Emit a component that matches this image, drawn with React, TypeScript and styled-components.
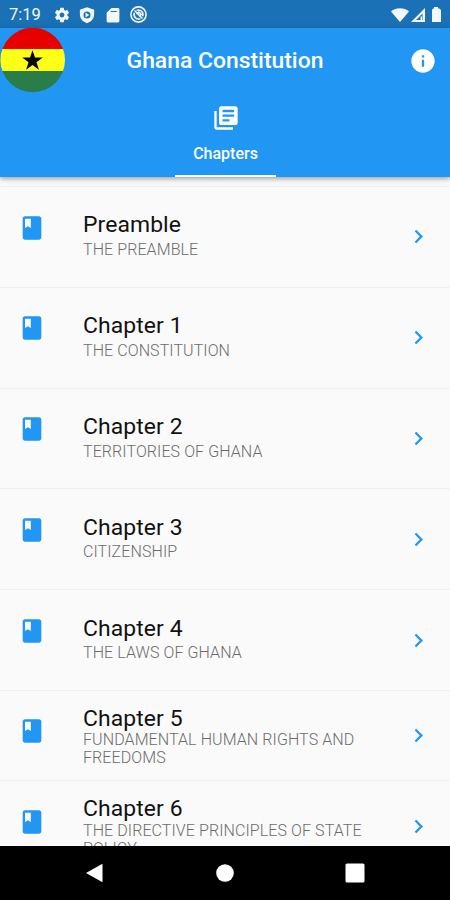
import React from "react";
import styled, { createGlobalStyle } from "styled-components";

const GlobalStyle = createGlobalStyle`
  * { box-sizing: border-box; }
  body { margin: 0; background: #fafafa; font-family: Roboto, sans-serif; }
`;

const Screen = styled.div`
  width: 450px;
  height: 900px;
  display: flex;
  flex-direction: column;
  overflow: hidden;
  background: #fafafa;
`;

const StatusBar = styled.div`
  height: 28px;
  flex: none;
  display: flex;
  align-items: center;
  padding: 1px 6px 0 9px;
  background: #1b71b6;
  color: #f2f8fd;
`;

const Clock = styled.span`
  width: 44px;
  font-size: 16.5px;
  line-height: 20px;
`;

const StatusGroup = styled.div<{ $gap: number; $end?: boolean }>`
  display: flex;
  align-items: center;
  gap: ${(p) => p.$gap}px;
  margin-left: ${(p) => (p.$end ? "auto" : "0")};
`;

const Icon = styled.svg<{ $size: number }>`
  display: block;
  flex: none;
  width: ${(p) => p.$size}px;
  height: ${(p) => p.$size}px;
  fill: currentColor;
`;

const Header = styled.header`
  height: 149px;
  flex: none;
  z-index: 1;
  display: flex;
  flex-direction: column;
  background: #2196f3;
  color: #fff;
  box-shadow: 0 2px 4px rgba(0, 0, 0, 0.28), 0 1px 9px rgba(0, 0, 0, 0.1);
`;

const TitleBar = styled.div`
  height: 65px;
  display: grid;
  grid-template-columns: 66px 1fr 66px;
  align-items: center;
`;

const Title = styled.h1`
  margin: 0;
  text-align: center;
  font-size: 22.9px;
  line-height: 28px;
  font-weight: 500;
`;

const InfoButton = styled.button`
  display: flex;
  justify-content: flex-end;
  padding: 0 13px 1px 0;
  border: 0;
  background: none;
  color: #fff;
`;

const Tabs = styled.nav`
  flex: 1;
  display: flex;
  justify-content: center;
  padding-left: 1px;
`;

const Tab = styled.div`
  width: 101px;
  display: flex;
  flex-direction: column;
  align-items: center;
  padding-top: 11px;
  border-bottom: 2px solid #f2fcff;
`;

const TabLabel = styled.span`
  margin-top: 12px;
  font-size: 16px;
  line-height: 19px;
  font-weight: 500;
`;

const List = styled.main`
  flex: 1;
  min-height: 0;
  overflow: hidden;
  padding-top: 9px;
`;

const Row = styled.div<{ $tall?: boolean }>`
  height: ${(p) => (p.$tall ? 90.5 : 100.8)}px;
  display: grid;
  grid-template-columns: 64.6px 310px 1fr;
  align-items: start;
  padding-left: 18.4px;
  border-top: 1px solid #efefef;
  color: #2196f3;
`;

const BookCell = styled.div`
  padding-top: 26.5px;
`;

const ArrowCell = styled.div`
  align-self: center;
  padding-left: 12px;
`;

const RowText = styled.div<{ $tall?: boolean }>`
  padding-top: ${(p) => (p.$tall ? 13.8 : 24.4)}px;
`;

const RowTitle = styled.div`
  color: #111;
  font-size: 22.9px;
  line-height: 27px;
  letter-spacing: 0.1px;
`;

const RowSubtitle = styled.div<{ $tall?: boolean }>`
  margin-top: ${(p) => (p.$tall ? -0.4 : 2.7)}px;
  color: #6c6c6c;
  font-size: 16px;
  line-height: 18px;
  font-weight: 300;
  letter-spacing: 0.09px;
`;

const NavBar = styled.footer`
  height: 54px;
  flex: none;
  display: flex;
  align-items: center;
  justify-content: space-between;
  padding: 0 85px;
  background: #000;
  color: #fff;
`;

const BOOK =
  "M18 2H6c-1.1 0-2 .9-2 2v16c0 1.1.9 2 2 2h12c1.1 0 2-.9 2-2V4c0-1.1-.9-2-2-2zM6 4h5v8l-2.5-1.5L6 12V4z";
const CHEVRON = "M10 6 8.59 7.41 13.17 12l-4.58 4.59L10 18l6-6z";
const LIBRARY =
  "M4 6H2v14c0 1.1.9 2 2 2h14v-2H4V6zm16-4H8c-1.1 0-2 .9-2 2v12c0 1.1.9 2 2 2h12c1.1 0 2-.9 2-2V4c0-1.1-.9-2-2-2zm-1 9H9V9h10v2zm-4 4H9v-2h6v2zm4-8H9V5h10v2z";
const INFO =
  "M12 2C6.48 2 2 6.48 2 12s4.48 10 10 10 10-4.48 10-10S17.52 2 12 2zm1 15h-2v-6h2v6zm0-8h-2V7h2v2z";
const GEAR =
  "M19.14 12.94c.04-.3.06-.61.06-.94 0-.32-.02-.64-.07-.94l2.03-1.58c.18-.14.23-.41.12-.61l-1.92-3.32c-.12-.22-.37-.29-.59-.22l-2.39.96c-.5-.38-1.03-.7-1.62-.94l-.36-2.54c-.04-.24-.24-.41-.48-.41h-3.84c-.24 0-.43.17-.47.41l-.36 2.54c-.59.24-1.13.57-1.62.94l-2.39-.96c-.22-.08-.47 0-.59.22L2.74 8.87c-.12.21-.08.47.12.61l2.03 1.58c-.05.3-.09.63-.09.94s.02.64.07.94l-2.03 1.58c-.18.14-.23.41-.12.61l1.92 3.32c.12.22.37.29.59.22l2.39-.96c.5.38 1.03.7 1.62.94l.36 2.54c.05.24.24.41.48.41h3.84c.24 0 .44-.17.47-.41l.36-2.54c.59-.24 1.13-.56 1.62-.94l2.39.96c.22.08.47 0 .59-.22l1.92-3.32c.12-.22.07-.47-.12-.61l-2.01-1.58zM12 15.2c-1.770 0-3.200-1.430-3.200-3.200s1.430-3.200 3.200-3.200 3.200 1.430 3.200 3.200-1.430 3.200-3.200 3.200z";

type GlyphProps = { path: string; size: number };
const Glyph = ({ path, size }: GlyphProps) => (
  <Icon $size={size} viewBox="0 0 24 24">
    <path d={path} />
  </Icon>
);

const Flag = () => (
  <Icon $size={66} viewBox="0 0 66 66">
    <defs>
      <clipPath id="disc">
        <circle cx="32.7" cy="32" r="32.3" />
      </clipPath>
    </defs>
    <g clipPath="url(#disc)">
      <rect width="66" height="21" fill="#e60000" />
      <rect y="21" width="66" height="22" fill="#ffff17" />
      <rect y="43" width="66" height="23" fill="#297d49" />
    </g>
    <path
      fill="#080808"
      d="M32.5 22.2 35 29.6h7.8l-6.3 4.6 2.4 7.5-6.4-4.6-6.4 4.6 2.4-7.5-6.3-4.6H30z"
    />
  </Icon>
);

const chapters = [
  { title: "Preamble", subtitle: "THE PREAMBLE" },
  { title: "Chapter 1", subtitle: "THE CONSTITUTION" },
  { title: "Chapter 2", subtitle: "TERRITORIES OF GHANA" },
  { title: "Chapter 3", subtitle: "CITIZENSHIP" },
  { title: "Chapter 4", subtitle: "THE LAWS OF GHANA" },
  { title: "Chapter 5", subtitle: "FUNDAMENTAL HUMAN RIGHTS AND FREEDOMS", tall: true },
  { title: "Chapter 6", subtitle: "THE DIRECTIVE PRINCIPLES OF STATE POLICY", tall: true },
];

export default function App() {
  return (
    <Screen>
      <GlobalStyle />
      <StatusBar>
        <Clock>7:19</Clock>
        <StatusGroup $gap={7.3}>
          <Glyph path={GEAR} size={18} />
          <Icon $size={18} viewBox="0 0 24 24">
            <path
              fillRule="evenodd"
              d="M12 1.500 2.500 5v6c0 5.800 3.800 10 9.500 12 5.700-2 9.500-6.200 9.500-12V5zM12 7.300a4.700 4.700 0 1 1 0 9.400 4.700 4.700 0 0 1 0-9.400z"
            />
            <path d="M10 8.800v6.400l5-3.200z" />
          </Icon>
          <Icon $size={18} viewBox="0 0 24 24">
            <path
              fillRule="evenodd"
              d="M18.500 2.500H10L3.500 9v11c0 1.100.9 2 2 2h13c1.100 0 2-.9 2-2v-15.500c0-1.100-.9-2-2-2zM9 6.500h8V8H9z"
            />
          </Icon>
          <Icon $size={19} viewBox="0 0 24 24">
            <g fill="none" stroke="currentColor" strokeWidth="2">
              <circle cx="12" cy="12" r="9.600" />
              <path d="M9.500 6.800a5.800 5.800 0 0 1 7.700 7.500M14.500 17.200a5.800 5.800 0 0 1-7.700-7.500" />
              <path d="m7 7 10 10M9.500 11.500l3-2.500 3 3-3 2.500" />
            </g>
          </Icon>
        </StatusGroup>
        <StatusGroup $gap={1} $end>
          <Icon $size={18} viewBox="0 0 18 18">
            <path d="M0 5.500C5 1.200 13 1.200 18 5.500L9 16z" />
          </Icon>
          <Icon $size={16} viewBox="0 0 16 16">
            <path fillRule="evenodd" d="M15 1v14H1zM12.500 6.500 6 13h6.500z" />
            <path d="M10.500 9.500H12V13h-1.500z" />
          </Icon>
          <Icon $size={17} viewBox="0 0 17 17">
            <path d="M7 1h4v1.500h1.500l1.500 1.500v12H5V4l1-1.500h1z" />
          </Icon>
        </StatusGroup>
      </StatusBar>
      <Header>
        <TitleBar>
          <Flag />
          <Title>Ghana Constitution</Title>
          <InfoButton aria-label="About">
            <Glyph path={INFO} size={28} />
          </InfoButton>
        </TitleBar>
        <Tabs>
          <Tab>
            <Glyph path={LIBRARY} size={28} />
            <TabLabel>Chapters</TabLabel>
          </Tab>
        </Tabs>
      </Header>
      <List>
        {chapters.map((c) => (
          <Row key={c.title} $tall={c.tall}>
            <BookCell>
              <Glyph path={BOOK} size={28} />
            </BookCell>
            <RowText $tall={c.tall}>
              <RowTitle>{c.title}</RowTitle>
              <RowSubtitle $tall={c.tall}>{c.subtitle}</RowSubtitle>
            </RowText>
            <ArrowCell>
              <Glyph path={CHEVRON} size={27} />
            </ArrowCell>
          </Row>
        ))}
      </List>
      <NavBar>
        <Icon $size={20} viewBox="0 0 20 20">
          <path d="M17.500 0.800v18.400L1 10z" />
        </Icon>
        <Icon $size={18} viewBox="0 0 18 18">
          <circle cx="9" cy="9" r="8.800" />
        </Icon>
        <Icon $size={20} viewBox="0 0 20 20">
          <rect x="0.500" y="0.500" width="19" height="19" rx="1.500" />
        </Icon>
      </NavBar>
    </Screen>
  );
}
